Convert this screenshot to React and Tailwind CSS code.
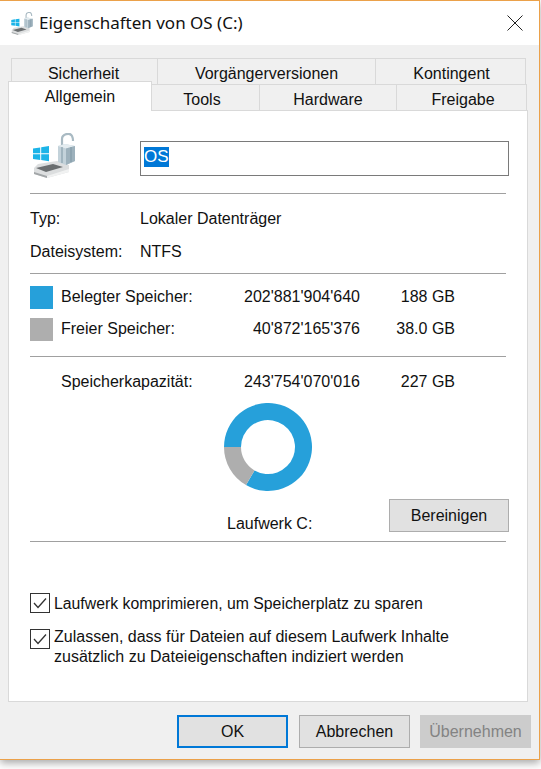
const DriveIcon = ({ className }) => (
  <svg viewBox="0 0 44 45" className={className}>
    {/* drive */}
    <path d="M5 31 L24 28 L36 32 V39 L14 45 L1 41 V35 Z" fill="#dcdedf" />
    <path d="M3 35 L20 31 L30 34 L13 39 Z" fill="#6a6e70" />
    <path d="M1 39 L14 43 V45 L1 41 Z" fill="#a2a6a8" />
    <path d="M14 43 L36 36 V39 L14 45 Z" fill="#f1f2f2" />
    {/* windows logo */}
    <path d="M0 15.5 L7.2 14.4 V20.2 H0 Z M8.2 14.2 L16 13 V20.2 H8.2 Z M0 21.2 H7.2 V27 L0 26 Z M8.2 21.2 H16 V28.2 L8.2 27.1 Z" fill="#1cb4e8" />
    {/* padlock */}
    <path d="M29 12 V6 C29 1 37 -1 39 3 C40 5 40 6 40 8" fill="none" stroke="#a9bac3" strokeWidth="2.2" />
    <path d="M25 13 L32 11 L42 13 V28 L33 32 L25 29 Z" fill="#c3d2da" />
    <path d="M25 13 L32 11 L42 13 L33 15.5 Z" fill="#e4ecf0" />
    <path d="M33 15.5 L42 13 V28 L33 32 Z" fill="#9db1bc" />
    <path d="M29 14 V30 M38 14 V29" stroke="#7f97a4" strokeWidth="1" fill="none" />
  </svg>
);

const Divider = ({ className }) => <div className={`h-px w-[476px] bg-[#a0a0a0] ${className}`} />;

const Check = () => (
  <span className="flex h-5 w-5 shrink-0 items-center justify-center border border-[#333333] bg-white">
    <svg viewBox="0 0 18 18" className="h-[18px] w-[18px]">
      <path d="M3 9 L7 13.5 L15 4.5" fill="none" stroke="#333333" strokeWidth="1.3" />
    </svg>
  </span>
);

const tabClass = "flex items-start justify-center overflow-hidden border-t border-r border-[#d9d9d9] bg-[#f0f0f0] h-[26px]";

const Btn = ({ children, className }) => (
  <button className={`flex h-[33px] w-[111px] items-center justify-center border ${className}`}>{children}</button>
);

const SpaceRow = ({ swatch, label, bytes, size, className }) => (
  <div className={`flex h-[23px] items-center ${className}`}>
    <span className={`h-[23px] w-[23px] ${swatch}`} />
    <span className="mb-[2px] ml-[8px] w-[160px]">{label}</span>
    <span className="mb-[2px] w-[139px] text-right">{bytes}</span>
    <span className="mb-[2px] w-[95px] text-right">{size}</span>
  </div>
);

export default function App() {
  return (
    <div className="h-[769px] w-[541px] overflow-hidden bg-white text-[16px] text-[#111111] font-['Liberation_Sans',Arial,sans-serif]">
      <div className="h-[760px] w-[540px] border-t border-r border-b border-[#eba14a] bg-[#f0f0f0] shadow-[0_3px_8px_rgba(0,0,0,0.35)]">
        <div className="flex h-[44px] items-center bg-white pl-[11px] pr-[16px]">
          <DriveIcon className="h-[23px] w-[23px]" />
          <span className="ml-[5px] text-[17px] font-['Noto_Sans',sans-serif]">Eigenschaften von OS (C:)</span>
          <svg viewBox="0 0 16 16" className="ml-auto h-4 w-4">
            <path d="M0.5 0.5 L15.5 15.5 M15.5 0.5 L0.5 15.5" stroke="#222222" strokeWidth="1" />
          </svg>
        </div>

        <div className="ml-[11px] mt-[13px] flex">
          <div className={`${tabClass} w-[147px] border-l pt-[3px] pr-[2px]`}>Sicherheit</div>
          <div className={`${tabClass} w-[218px] pt-[3px]`}>Vorgängerversionen</div>
          <div className={`${tabClass} w-[150px] pl-[2px] pt-[3px]`}>Kontingent</div>
        </div>
        <div className="ml-[8px] flex h-[26px]">
          <div className="relative z-10 -mt-[3px] flex h-[30px] w-[144px] justify-center border-t border-l border-r border-[#d9d9d9] bg-white pt-[3px]">
            Allgemein
          </div>
          <div className={`${tabClass} w-[108px] pr-[7px] pt-[3px]`}>Tools</div>
          <div className={`${tabClass} w-[137px] pt-[3px]`}>Hardware</div>
          <div className={`${tabClass} w-[130px] pl-[3px] pt-[3px]`}>Freigabe</div>
        </div>

        <div className="ml-[8px] h-[592px] w-[520px] border border-[#d9d9d9] bg-white pl-[21px]">
          <div className="mt-[22px] flex h-[45px]">
            <DriveIcon className="ml-[3px] h-[45px] w-[44px]" />
            <div className="ml-[63px] mt-[8px] h-[35px] w-[369px] border border-[#7a7a7a] pl-[3px] pt-[3px]">
              <span className="inline-block h-[20px] bg-[#0078d7] text-[17px] leading-[20px] text-white">OS</span>
            </div>
          </div>
          <Divider className="mt-[15px]" />

          <div className="mt-[8px] flex h-[33px] items-center">
            <span className="w-[110px]">Typ:</span>
            <span>Lokaler Datenträger</span>
          </div>
          <div className="flex h-[33px] items-center">
            <span className="w-[110px]">Dateisystem:</span>
            <span>NTFS</span>
          </div>
          <Divider className="mt-[5px]" />

          <SpaceRow className="mt-[12px]" swatch="bg-[#26a0da]" label="Belegter Speicher:" bytes="202'881'904'640" size="188 GB" />
          <SpaceRow className="mt-[9px]" swatch="bg-[#aeaeae]" label="Freier Speicher:" bytes="40'872'165'376" size="38.0 GB" />
          <Divider className="mt-[15px]" />

          <div className="ml-[31px] mt-[13px] flex h-[24px] items-center">
            <span className="w-[160px]">Speicherkapazität:</span>
            <span className="w-[139px] text-right">243'754'070'016</span>
            <span className="w-[95px] text-right">227 GB</span>
          </div>

          <svg viewBox="0 0 88 88" className="ml-[194px] mt-[9px] h-[88px] w-[88px]">
            <path d="M0 44 A44 44 0 1 1 22 82.1 L30.5 67.4 A27 27 0 1 0 17 44 Z" fill="#26a0da" />
            <path d="M0 44 A44 44 0 0 0 22 82.1 L30.5 67.4 A27 27 0 0 1 17 44 Z" fill="#aeaeae" />
          </svg>

          <div className="mt-[8px] flex h-[33px]">
            <span className="ml-[197px] mt-[15px] w-[86px] whitespace-nowrap leading-[20px]">Laufwerk C:</span>
            <button className="ml-[76px] flex h-[33px] w-[120px] items-center justify-center border border-[#adadad] bg-[#e1e1e1]">
              Bereinigen
            </button>
          </div>
          <Divider className="mt-[9px]" />

          <div className="mt-[51px] flex gap-[4px] text-[15.8px] leading-[20px]">
            <Check />
            <span className="mt-px">Laufwerk komprimieren, um Speicherplatz zu sparen</span>
          </div>
          <div className="mt-[15px] flex gap-[4px] leading-[20px]">
            <Check />
            <span className="-mt-[2px]">
              Zulassen, dass für Dateien auf diesem Laufwerk Inhalte
              <br />
              zusätzlich zu Dateieigenschaften indiziert werden
            </span>
          </div>
        </div>

        <div className="mt-[13px] flex justify-end gap-[10px] pr-[8px]">
          <Btn className="mr-px border-2 border-[#0078d7] bg-[#e1e1e1]">OK</Btn>
          <Btn className="border-[#adadad] bg-[#e1e1e1]">Abbrechen</Btn>
          <Btn className="border-[#cccccc] bg-[#cccccc] text-[#838383]">Übernehmen</Btn>
        </div>
      </div>
    </div>
  );
}
